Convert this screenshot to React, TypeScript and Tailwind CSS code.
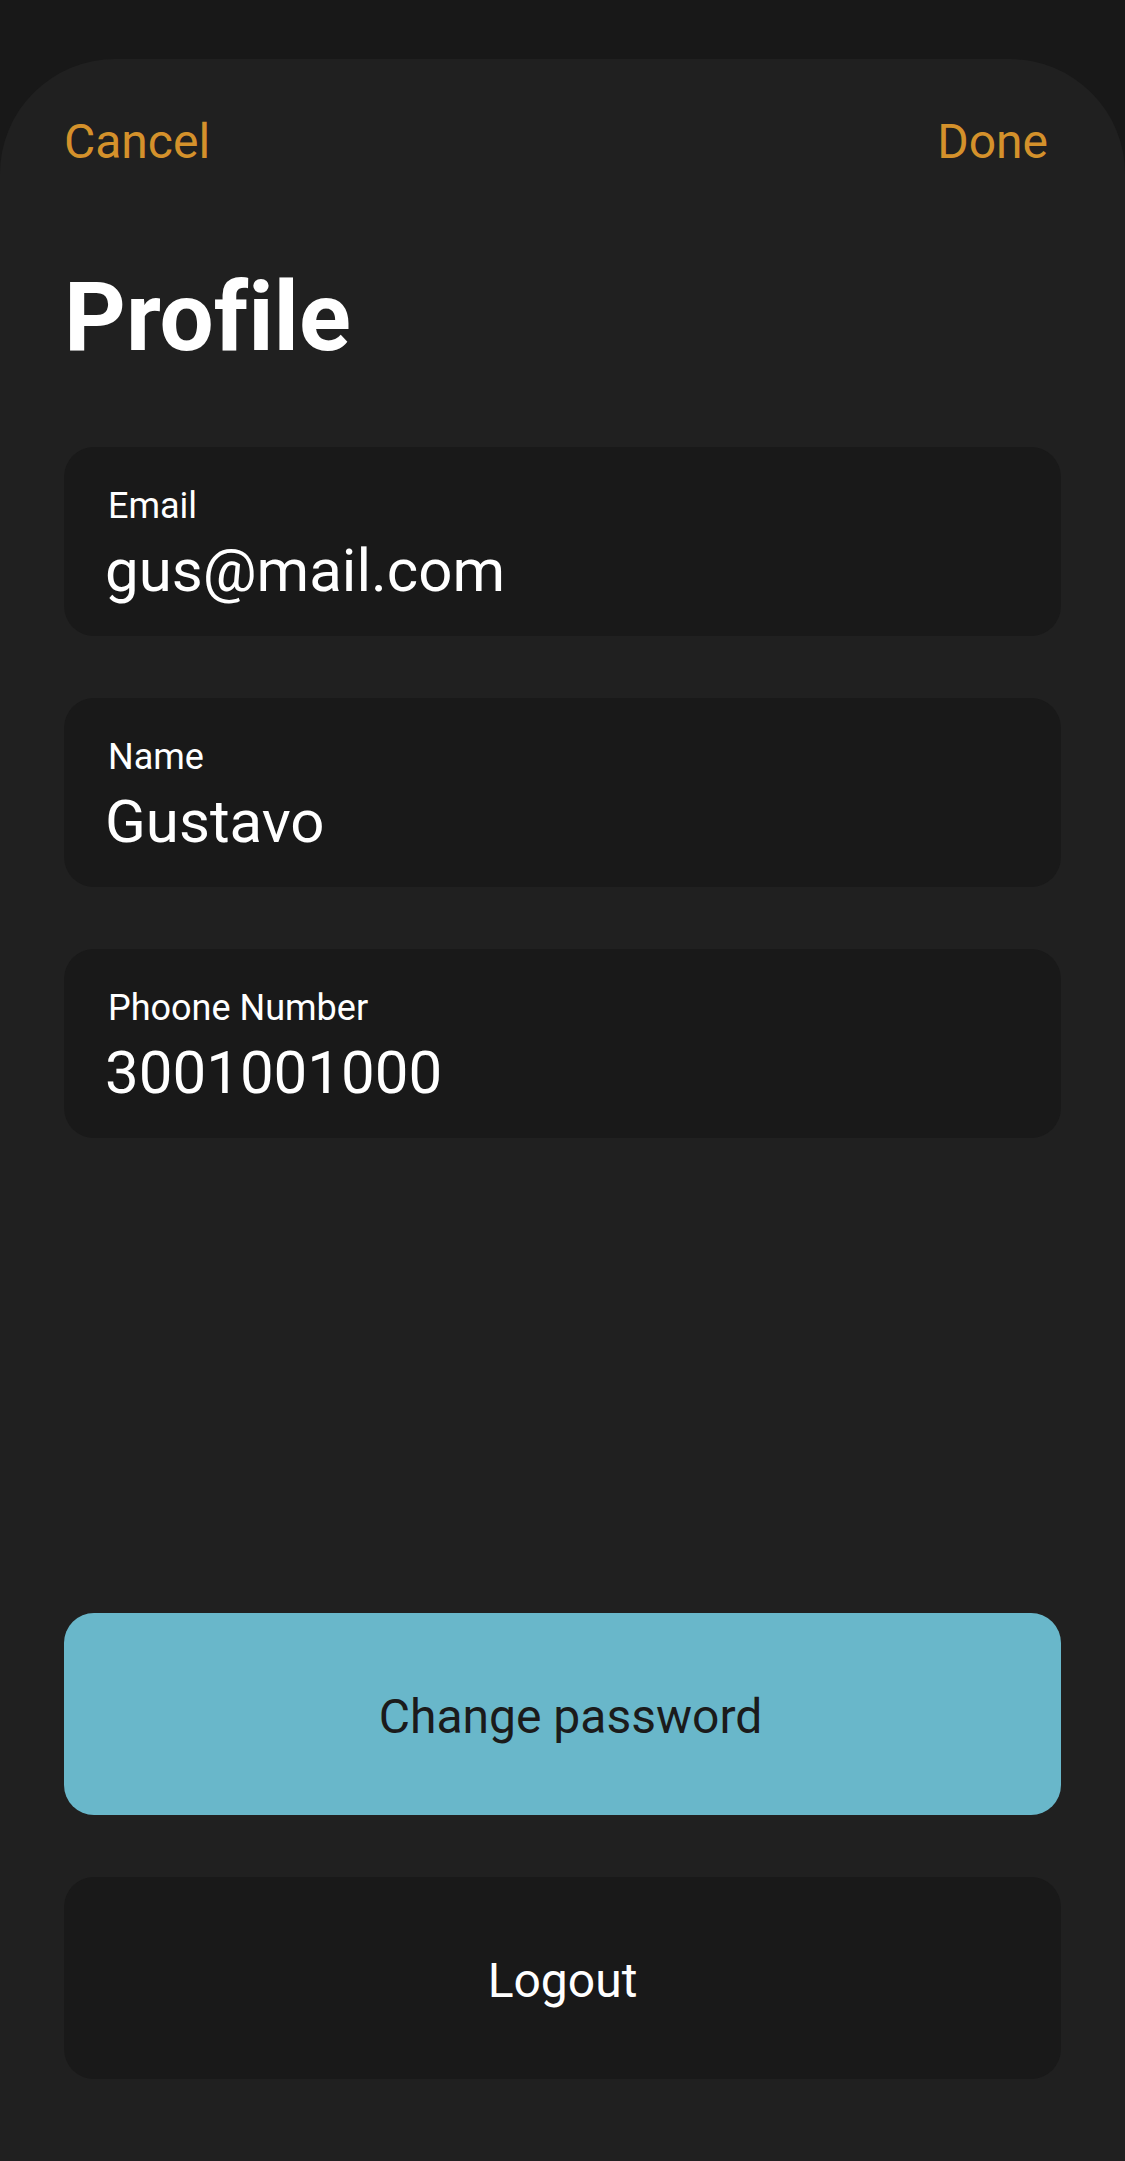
const fields = [
  { label: "Email", value: "gus@mail.com" },
  { label: "Name", value: "Gustavo" },
  { label: "Phoone Number", value: "3001001000" },
];

function Field({ label, value }: { label: string; value: string }) {
  return (
    <div className="flex h-[189px] flex-col rounded-[30px] bg-[#191919] pl-[44px] pt-[38px]">
      <span className="text-[36px] leading-[42px] text-white">{label}</span>
      <span className="-ml-[3px] mt-[9px] text-[60px] leading-[70px] text-white">
        {value}
      </span>
    </div>
  );
}

export default function App() {
  return (
    <div className="flex min-h-screen flex-col bg-[#181818] pt-[59px] font-['Roboto',sans-serif] [font-variant-ligatures:none]">
      <div className="flex flex-1 flex-col rounded-t-[115px] bg-[#202020] px-16 pb-[82px]">
        <div className="flex items-center justify-between pt-[55px] text-[48px] leading-[56px] text-[#d4912b]">
          <button type="button">Cancel</button>
          <button type="button" className="mr-[13px]">
            Done
          </button>
        </div>

        <h1 className="mt-[91px] text-[96px] font-bold leading-[112px] text-white">
          Profile
        </h1>

        <div className="mt-[74px] flex flex-col gap-[62px]">
          {fields.map((f) => (
            <Field key={f.label} label={f.label} value={f.value} />
          ))}
        </div>

        <div className="mt-auto flex flex-col gap-[62px]">
          <button
            type="button"
            className="flex h-[202px] items-center justify-center rounded-[30px] bg-[#69b7ca] pl-[16px] pt-[5px] text-[48px] leading-[56px] text-[#1b1b1b]"
          >
            Change password
          </button>
          <button
            type="button"
            className="flex h-[202px] items-center justify-center rounded-[30px] bg-[#191919] pt-[5px] text-[48px] leading-[56px] text-white"
          >
            Logout
          </button>
        </div>
      </div>
    </div>
  );
}
